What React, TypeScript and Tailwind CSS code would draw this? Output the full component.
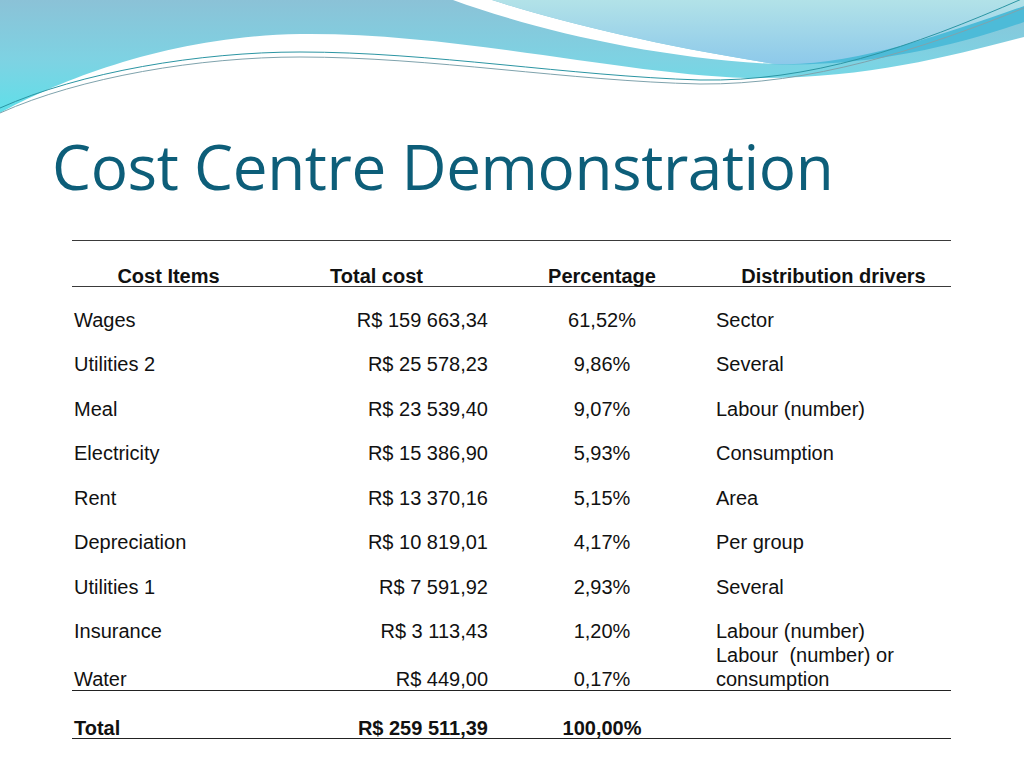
import React from "react";

type Row = {
  item: string;
  cost: string;
  pct: string;
  driver: React.ReactNode;
};

const rows: Row[] = [
  { item: "Wages", cost: "R$ 159 663,34", pct: "61,52%", driver: "Sector" },
  { item: "Utilities 2", cost: "R$ 25 578,23", pct: "9,86%", driver: "Several" },
  { item: "Meal", cost: "R$ 23 539,40", pct: "9,07%", driver: "Labour (number)" },
  { item: "Electricity", cost: "R$ 15 386,90", pct: "5,93%", driver: "Consumption" },
  { item: "Rent", cost: "R$ 13 370,16", pct: "5,15%", driver: "Area" },
  { item: "Depreciation", cost: "R$ 10 819,01", pct: "4,17%", driver: "Per group" },
  { item: "Utilities 1", cost: "R$ 7 591,92", pct: "2,93%", driver: "Several" },
  { item: "Insurance", cost: "R$ 3 113,43", pct: "1,20%", driver: "Labour (number)" },
];

function Waves() {
  return (
    <svg width="1024" height="120" viewBox="0 0 1024 120" className="block">
      <defs>
        <linearGradient id="mainFill" x1="0" y1="0" x2="0" y2="1">
          <stop offset="0" stopColor="#8bc2d7" />
          <stop offset="0.55" stopColor="#7dd3e3" />
          <stop offset="1" stopColor="#5fdfe9" />
        </linearGradient>
        <linearGradient id="topRight" x1="0" y1="0" x2="0" y2="1">
          <stop offset="0" stopColor="#b2e2e8" />
          <stop offset="1" stopColor="#8dc9ea" />
        </linearGradient>
      </defs>
      {/* main cyan swoosh */}
      <path
        d="M0,0 H1024 V37 C950,56 870,78 760,78 C640,78 460,32 300,34 C170,36 60,80 0,113 Z"
        fill="url(#mainFill)"
      />
      {/* darker blue band on the right */}
      <path
        d="M770,64 C860,62 950,28 1024,6 V22 C950,48 860,68 770,64 Z"
        fill="#4dbbd8"
      />
      {/* white ribbon */}
      <path
        d="M453,0 C530,28 650,58 775,64 C660,46 560,22 492,0 Z"
        fill="#ffffff"
      />
      {/* top right light area */}
      <path
        d="M492,0 C560,22 660,46 775,64 C850,68 950,32 1024,6 V0 Z"
        fill="url(#topRight)"
      />
      {/* thin lines */}
      <path
        d="M0,108 C80,72 200,52 300,52 C430,52 570,76 700,80 C810,82 910,48 1024,-2"
        fill="none"
        stroke="#2b95a3"
        strokeWidth="1"
      />
      <path
        d="M0,113 C80,77 200,57 300,57 C430,57 570,81 700,84 C810,85 920,50 1024,8"
        fill="none"
        stroke="#7fa3ad"
        strokeWidth="1"
      />
    </svg>
  );
}

export default function App() {
  return (
    <div className="w-[1024px] h-[768px] bg-white overflow-hidden font-['Liberation_Sans',Arial,sans-serif] text-[#111]">
      <Waves />

      {/* Title */}
      <h1 className="mt-[15px] pl-[52px] text-[62px] leading-none text-[#0d5e79] font-['Open_Sans',sans-serif] tracking-[-0.4px]">
        Cost Centre Demonstration
      </h1>

      {/* Table */}
      <div className="ml-[72px] mt-[43px] w-[879px] text-[20px] leading-6">
        <div className="grid grid-cols-[193px_223px_228px_235px] h-[47px] items-end leading-5 border-t-[1.5px] border-b-[1.5px] border-[#3a3a3a] font-bold">
          <div className="text-center">Cost Items</div>
          <div className="text-center">Total cost</div>
          <div className="text-center">Percentage</div>
          <div className="text-center">Distribution drivers</div>
        </div>

        {rows.map((r) => (
          <div
            key={r.item}
            className="grid grid-cols-[193px_223px_228px_235px] h-[44.5px] items-end"
          >
            <div className="pl-[2px]">{r.item}</div>
            <div className="text-right">{r.cost}</div>
            <div className="text-center">{r.pct}</div>
            <div>{r.driver}</div>
          </div>
        ))}

        <div className="grid grid-cols-[193px_223px_228px_235px] h-[48px] items-end border-b-[1.5px] border-[#222]">
          <div className="pl-[2px]">Water</div>
          <div className="text-right">R$ 449,00</div>
          <div className="text-center">0,17%</div>
          <div className="whitespace-pre">
            {"Labour  (number) or"}
            <br />
            consumption
          </div>
        </div>

        <div className="grid grid-cols-[193px_223px_228px_235px] h-[48px] items-end leading-5 border-b-[1.5px] border-[#222] font-bold">
          <div className="pl-[2px]">Total</div>
          <div className="text-right">R$ 259 511,39</div>
          <div className="text-center">100,00%</div>
          <div />
        </div>
      </div>
    </div>
  );
}
